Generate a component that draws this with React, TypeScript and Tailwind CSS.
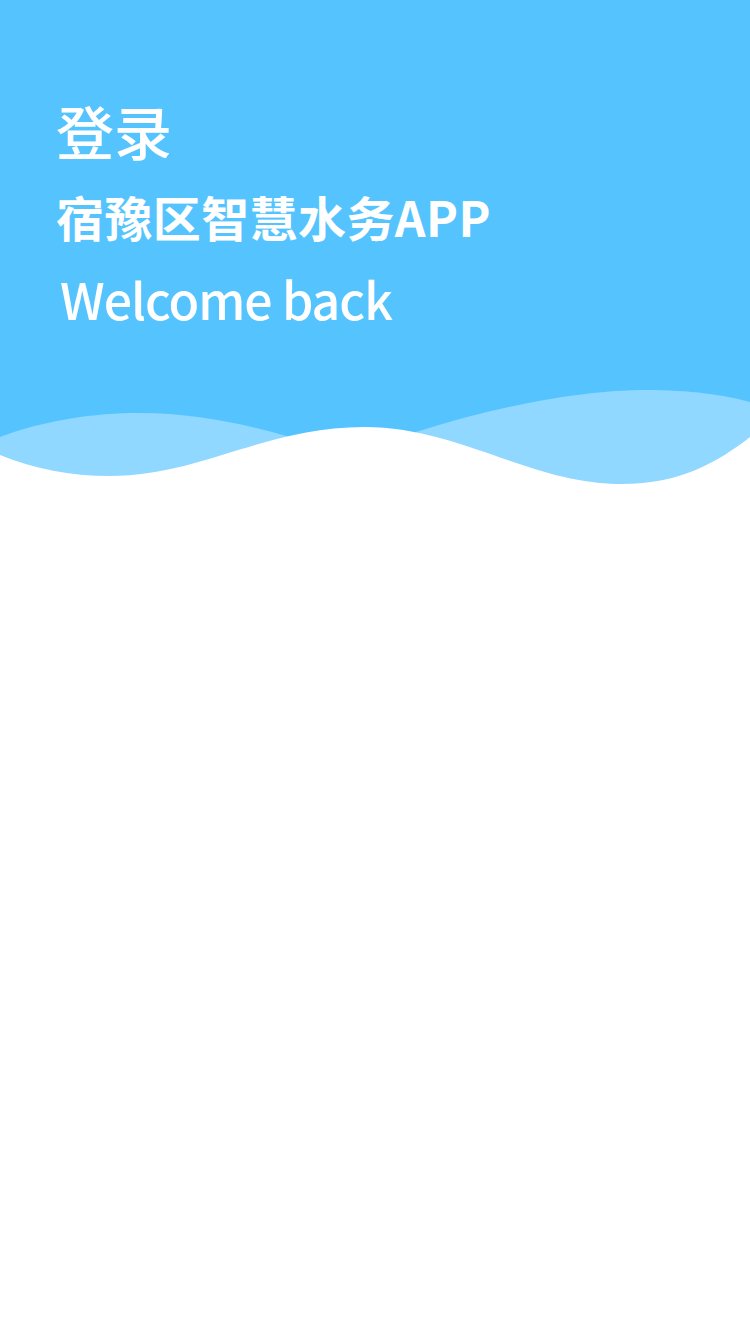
import React from 'react';

const cjk = '"Noto Sans CJK SC", "Noto Sans", sans-serif';

const Wave = () => (
  <svg viewBox="0 0 750 110" className="block w-full h-[110px]" preserveAspectRatio="none">
    <rect x="0" y="0" width="750" height="110" fill="#55c4fe" />
    {/* light wave behind */}
    <path
      d="M0 57 C 45 40, 95 33, 139 33 C 195 33, 245 44, 290 57 L 416 57 L 416 52 C 500 25, 585 10, 646 10 C 690 10, 725 15, 750 22 L 750 110 L 0 110 Z"
      fill="#90d8ff"
    />
    {/* white front wave */}
    <path
      d="M0 75 C 35 89, 70 96, 110 96 C 200 96, 265 47, 364 47 C 460 47, 530 104, 622 104 C 680 104, 718 82, 750 57 L 750 110 L 0 110 Z"
      fill="#ffffff"
    />
  </svg>
);

export default function App() {
  return (
    <div className="min-h-[1334px] w-[750px] bg-white" style={{ fontFamily: cjk }}>
      <div className="bg-[#55c4fe] h-[380px] px-[56px] pt-[92px] text-white flex flex-col">
        <h1 className="text-[58px] leading-[76px] font-medium">登录</h1>
        <h2 className="mt-[16px] text-[48px] leading-[64px] font-bold tracking-[0.4px]">宿豫区智慧水务APP</h2>
        <p className="mt-[17px] pl-[4px] text-[50px] leading-[66px] font-medium tracking-[-1px]">Welcome back</p>
      </div>
      <Wave />
    </div>
  );
}
